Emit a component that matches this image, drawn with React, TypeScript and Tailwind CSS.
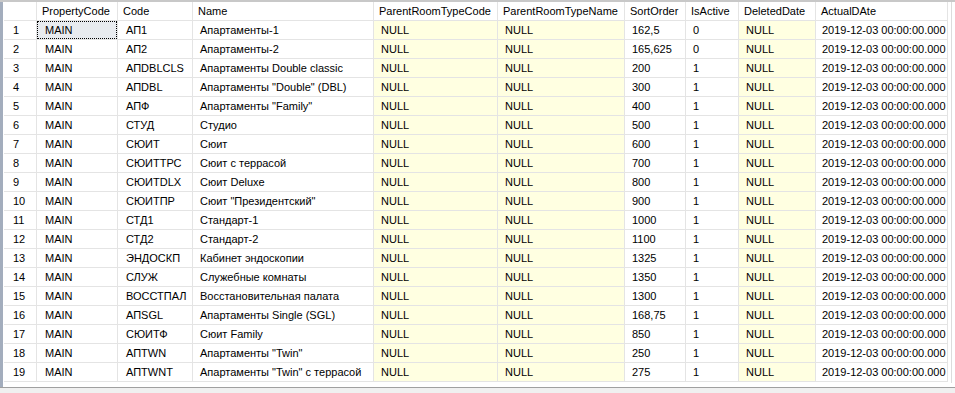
import React from "react";

// Results grid columns: [header, width]
const columns: [string, number][] = [
  ["PropertyCode", 81],
  ["Code", 75],
  ["Name", 181],
  ["ParentRoomTypeCode", 124],
  ["ParentRoomTypeName", 127],
  ["SortOrder", 61],
  ["IsActive", 53],
  ["DeletedDate", 77],
  ["ActualDAte", 132],
];

const rows: [string, string, string][] = [
  ["АП1", "Апартаменты-1", "162,5"],
  ["АП2", "Апартаменты-2", "165,625"],
  ["АПDBLCLS", "Апартаменты Double classic", "200"],
  ["АПDBL", 'Апартаменты "Double" (DBL)', "300"],
  ["АПФ", 'Апартаменты "Family"', "400"],
  ["СТУД", "Студио", "500"],
  ["СЮИТ", "Сюит", "600"],
  ["СЮИТТРС", "Сюит с террасой", "700"],
  ["СЮИТDLX", "Сюит Deluxe", "800"],
  ["СЮИТПР", 'Сюит "Президентский"', "900"],
  ["СТД1", "Стандарт-1", "1000"],
  ["СТД2", "Стандарт-2", "1100"],
  ["ЭНДОСКП", "Кабинет эндоскопии", "1325"],
  ["СЛУЖ", "Служебные комнаты", "1350"],
  ["ВОССТПАЛ", "Восстановительная палата", "1300"],
  ["АПSGL", "Апартаменты Single (SGL)", "168,75"],
  ["СЮИТФ", "Сюит Family", "850"],
  ["АПTWN", 'Апартаменты "Twin"', "250"],
  ["АПTWNT", 'Апартаменты "Twin" с террасой', "275"],
];

const cell =
  "h-[19px] border-r border-b border-[#e4e4e4] flex items-center whitespace-nowrap overflow-hidden";

export default function App() {
  return (
    <div
      className="w-[955px] h-[393px] bg-white text-[11px] text-black flex flex-col overflow-hidden"
      style={{ fontFamily: '"Liberation Sans", Arial, sans-serif' }}
    >
      <div className="flex flex-1 border-t-2 border-[#c8c8c8]">
        <div className="w-[3px] bg-[#a3adbd]" />
        <div className="w-[1px]" />
        <div className="flex flex-col">
          {/* header */}
          <div className="flex">
            <div className={`${cell} w-[33px]`} />
            {columns.map(([name, w]) => (
              <div key={name} className={`${cell} pl-[5px]`} style={{ width: w }}>
                {name}
              </div>
            ))}
          </div>
          {rows.map(([code, name, sort], i) => {
            const active = i < 2 ? "0" : "1";
            return (
              <div key={i} className="flex">
                <div className={`${cell} w-[33px] pl-[9px]`}>{i + 1}</div>
                <div className={`${cell} w-[81px] ${i === 0 ? "bg-[#e8ebef]" : ""} relative pl-[8px]`}>
                  {i === 0 && (
                    <div className="absolute inset-0 border border-dotted border-black" />
                  )}
                  MAIN
                </div>
                <div className={`${cell} w-[75px] pl-[8px]`}>{code}</div>
                <div className={`${cell} w-[181px] pl-[7px]`}>{name}</div>
                <div className={`${cell} w-[124px] pl-[7px] bg-[#ffffe1]`}>NULL</div>
                <div className={`${cell} w-[127px] pl-[7px] bg-[#ffffe1]`}>NULL</div>
                <div className={`${cell} w-[61px] pl-[7px]`}>{sort}</div>
                <div className={`${cell} w-[53px] pl-[7px]`}>{active}</div>
                <div className={`${cell} w-[77px] pl-[7px] bg-[#ffffe1]`}>NULL</div>
                <div className={`${cell} w-[132px] pl-[6px]`}>2019-12-03 00:00:00.000</div>
              </div>
            );
          })}
        </div>
        <div className="w-[3px]" />
        <div className="w-[1px] h-[381px] bg-[#dcdcdc]" />
      </div>
      <div className="h-[6px] border-t border-[#a0a0a0] bg-[#f0f0f0]" />
    </div>
  );
}
